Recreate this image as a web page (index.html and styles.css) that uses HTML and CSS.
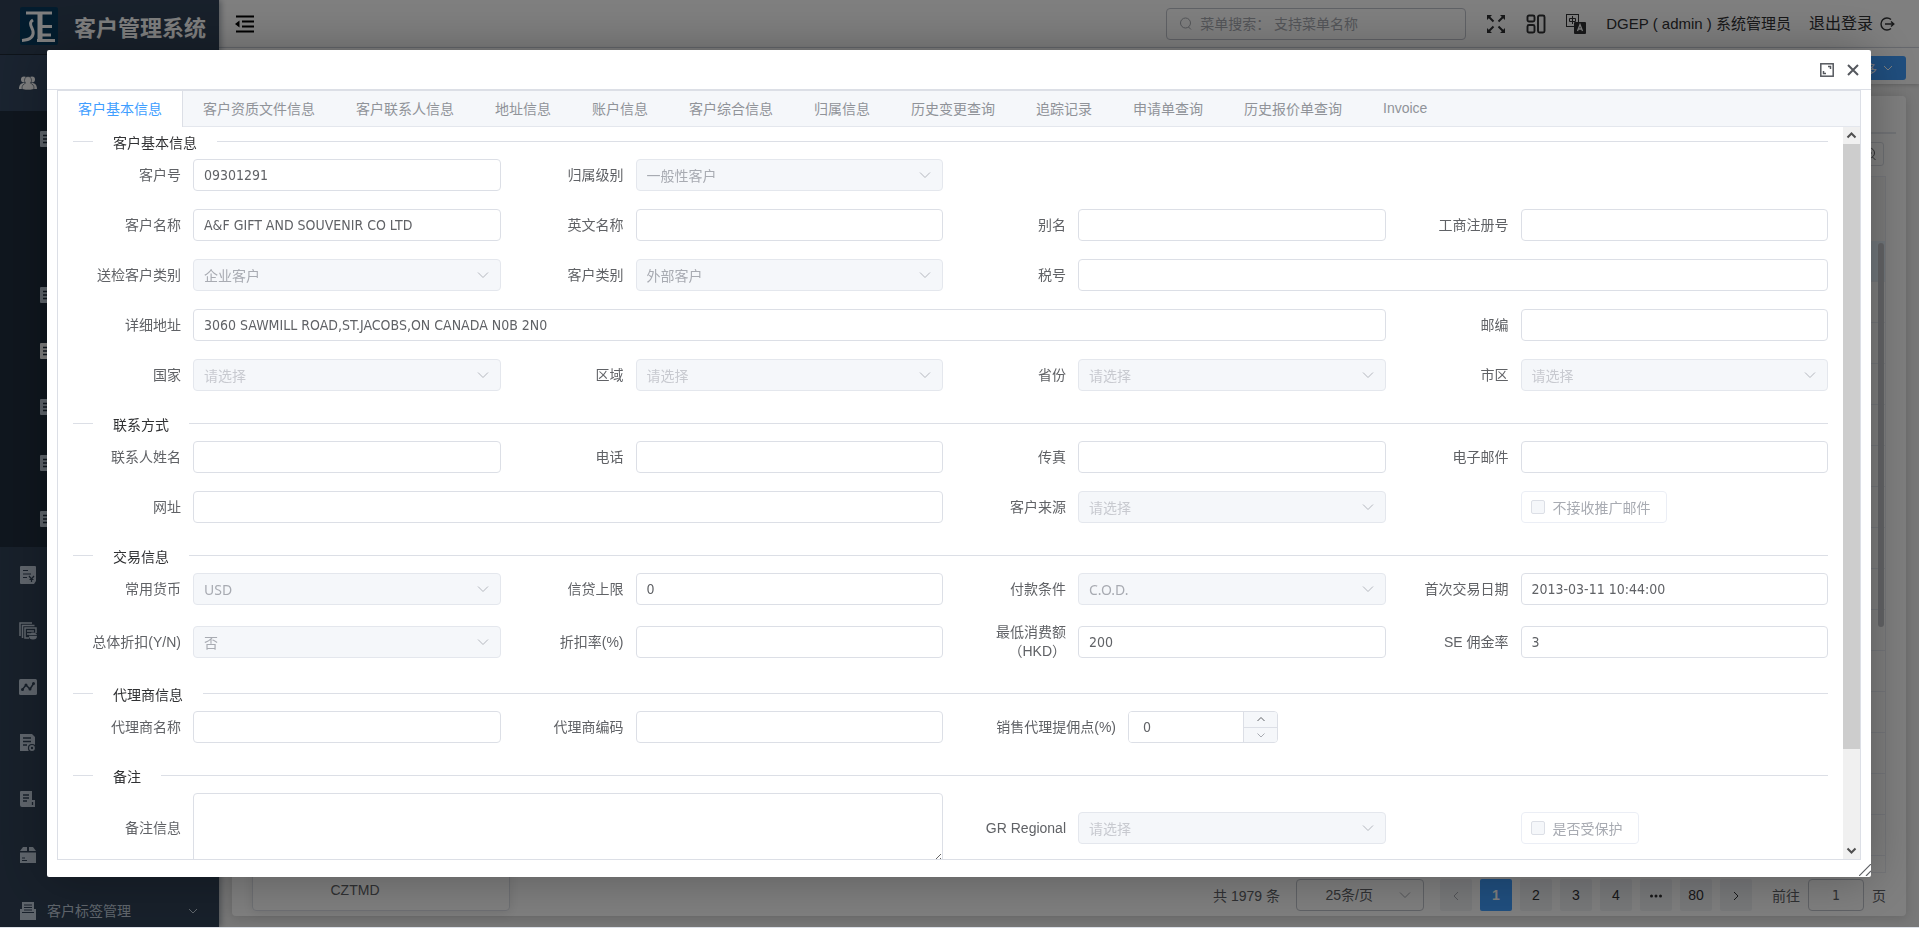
FILE: index.html
```html
<!DOCTYPE html>
<html lang="zh-CN">
<head>
<meta charset="utf-8">
<title>客户管理系统</title>
<link rel="stylesheet" href="styles.css">
</head>
<body>
<div class="app">
  <aside class="sidebar">
    <div class="brand">
      <svg class="brand-logo" viewBox="0 0 38 38" aria-hidden="true"><rect width="38" height="38" rx="2" fill="#06395c"/><g fill="none" stroke="#fff" stroke-width="3"><path d="M6 6h26M19 6v26"/><path d="M32 19.500h-13M31 28h-12M17 33.500h18M21 6v26"/><path d="M13 13c-5 3-1 7 0 11 1 5-2 9-11 9.500"/></g></svg>
      <h1 class="brand-title">客户管理系统</h1>
    </div>
    <nav class="menu">
      <a class="menu-item menu-item-open" href="#" aria-label="客户"><svg class="icon" viewBox="0 0 18 18"><g fill="currentColor"><circle cx="5" cy="5.500" r="3"/><circle cx="13" cy="5.500" r="3"/><path d="M0 15c0-4 2-6 5-6s4 1 4 6zM9 15c0-5 1-6 4-6s5 2 5 6z"/></g><path d="M9 2.500c2 0 3.500 1.500 3.500 4 0 1-.5 2-1 2.700 2 .8 3.500 2.300 3.500 4.800 0 1.500-2 2-6 2s-6-.5-6-2c0-2.500 1.500-4 3.500-4.800-.5-.7-1-1.700-1-2.700 0-2.500 1.500-4 3.500-4z" fill="currentColor" stroke="#304156" stroke-width=".6"/></svg></a>
      <div class="submenu">
        <a class="sub-item" href="#" aria-label="客户管理"><svg class="icon" viewBox="0 0 16 16"><rect width="16" height="16" rx="1" fill="currentColor"/><path d="M3 4.500h10M3 8h10M3 11.500h10" stroke="#1f2d3d" stroke-width="1.500"/></svg></a>
        <div class="sub-nested"></div>
        <a class="sub-item" href="#" aria-label="子菜单一"><svg class="icon" viewBox="0 0 16 16"><rect width="16" height="16" rx="1" fill="currentColor"/><path d="M3 4.500h10M3 8h10M3 11.500h10" stroke="#1f2d3d" stroke-width="1.500"/></svg></a>
        <a class="sub-item sub-item-active" href="#" aria-label="子菜单二"><svg class="icon" viewBox="0 0 16 16"><rect width="16" height="16" rx="1" fill="currentColor"/><path d="M3 4.500h10M3 8h10M3 11.500h10" stroke="#1f2d3d" stroke-width="1.500"/></svg></a>
        <a class="sub-item" href="#" aria-label="子菜单三"><svg class="icon" viewBox="0 0 16 16"><rect width="16" height="16" rx="1" fill="currentColor"/><path d="M3 4.500h10M3 8h10M3 11.500h10" stroke="#1f2d3d" stroke-width="1.500"/></svg></a>
        <a class="sub-item" href="#" aria-label="子菜单四"><svg class="icon" viewBox="0 0 16 16"><rect width="16" height="16" rx="1" fill="currentColor"/><path d="M3 4.500h10M3 8h10M3 11.500h10" stroke="#1f2d3d" stroke-width="1.500"/></svg></a>
        <a class="sub-item" href="#" aria-label="子菜单五"><svg class="icon" viewBox="0 0 16 16"><rect width="16" height="16" rx="1" fill="currentColor"/><path d="M3 4.500h10M3 8h10M3 11.500h10" stroke="#1f2d3d" stroke-width="1.500"/></svg></a>
      </div>
      <a class="menu-item" href="#" aria-label="报价"><svg class="icon" viewBox="0 0 18 18"><path d="M2 0h14a1 1 0 0 1 1 1v14l-2 3H2a1 1 0 0 1-1-1V1a1 1 0 0 1 1-1z" fill="currentColor"/><path d="M4 4.500h5M4 8h8M4 11.500h4M10 10l2.500 3 2.500-3M12.500 13v3M10.500 13.500h4" stroke="#304156" stroke-width="1.200" fill="none"/></svg></a>
      <a class="menu-item" href="#" aria-label="账务"><svg class="icon" viewBox="0 0 18 18"><g fill="none" stroke="currentColor" stroke-width="1.500"><path d="M1 14V1h12M3.500 16V3.500H15.500M10 16H6V6h11v5"/><path d="M8 9h7M8 12h3" /></g><ellipse cx="14" cy="14" rx="4" ry="3.500" fill="currentColor"/><path d="M10 13.500h8" stroke="#304156" stroke-width=".8"/></svg></a>
      <a class="menu-item" href="#" aria-label="统计"><svg class="icon" viewBox="0 0 18 18"><rect y="1" width="18" height="16" rx="1.500" fill="currentColor"/><path d="M3 12l4-5 4 4 4-6" fill="none" stroke="#304156" stroke-width="1.500"/><g fill="#304156"><circle cx="3.500" cy="11.500" r="1.500"/><circle cx="7" cy="7" r="1.500"/><circle cx="11" cy="11" r="1.500"/><circle cx="14.500" cy="5.500" r="1.500"/></g></svg></a>
      <a class="menu-item" href="#" aria-label="申请"><svg class="icon" viewBox="0 0 18 18"><path d="M1 0h12l3 3v14H1z" fill="currentColor"/><path d="M4 4h8M4 7.500h8M4 11h4" stroke="#304156" stroke-width="1.300"/><circle cx="13" cy="14" r="3.500" fill="currentColor" stroke="#304156" stroke-width="1.200"/><circle cx="13" cy="14" r="1.200" fill="#304156"/></svg></a>
      <a class="menu-item" href="#" aria-label="单据"><svg class="icon" viewBox="0 0 18 18"><path d="M2 1h11v9h3v7H3a2 2 0 0 1-2-2V2a1 1 0 0 1 1-1z" fill="currentColor"/><path d="M4 5h6M4 8h6M4 11h4M13.500 12v3" stroke="#304156" stroke-width="1.300"/></svg></a>
      <a class="menu-item" href="#" aria-label="样品"><svg class="icon" viewBox="0 0 18 18"><path d="M4 1h4v4H1zM10 1h4l3 4h-7zM1 6.500h16V17H1z" fill="currentColor"/><path d="M3 12h3M3 14.500h5" stroke="#304156" stroke-width="1.200"/></svg></a>
      <a class="menu-item" href="#"><svg class="icon" viewBox="0 0 18 18"><path d="M3 0h12v10H3zM1 7h2v4h12V7h2v11H1z" fill="currentColor"/><path d="M5 3h8M5 5.500h8M5 8h8" stroke="#304156"/></svg><span class="menu-text">客户标签管理</span><svg class="menu-arrow" viewBox="0 0 12 12"><path d="M2 4l4 4 4-4" fill="none" stroke="currentColor"/></svg></a>
    </nav>
  </aside>
  <div class="main">
    <header class="topbar">
      <button class="icon-button fold" type="button" aria-label="收起菜单"><svg viewBox="0 0 20 18"><path d="M1 1.500h18M7 6.500h12M7 11.500h12M1 16.500h18" stroke="currentColor" stroke-width="1.800"/><path d="M0 9l4.500-3.500v7z" fill="currentColor"/></svg></button>
      <label class="menu-search"><svg viewBox="0 0 14 14"><circle cx="6.500" cy="6" r="5" fill="none" stroke="currentColor"/><path d="M9.500 10l2.500 2.500" stroke="currentColor"/></svg><input class="menu-search-input" type="text" aria-label="菜单搜索" placeholder="菜单搜索： 支持菜单名称"></label>
      <button class="icon-button" type="button" aria-label="全屏"><svg viewBox="0 0 20 20"><path d="M2 2l5.500 5.500M18 2l-5.500 5.500M2 18l5.500-5.500M18 18l-5.500-5.500" stroke="currentColor" stroke-width="2"/><path d="M1 1h5L1 6zM19 1h-5l5 5zM1 19h5l-5-5zM19 19h-5l5-5z" fill="currentColor"/></svg></button>
      <button class="icon-button" type="button" aria-label="布局"><svg viewBox="0 0 20 20"><g fill="none" stroke="currentColor" stroke-width="1.900"><rect x="1.500" y="1.500" width="7" height="6" rx="1.500"/><rect x="1.500" y="11" width="7" height="7.500" rx="1.500"/><rect x="12" y="1.500" width="6.500" height="17" rx="1.500"/></g></svg></button>
      <button class="icon-button" type="button" aria-label="语言"><svg viewBox="0 0 20 20"><rect x=".5" y=".5" width="12" height="12" fill="none" stroke="currentColor"/><path d="M3.500 4.500h6v3h-6zM6.500 2v8" fill="none" stroke="currentColor"/><rect x="8" y="8" width="12" height="12" rx="1" fill="currentColor"/><path d="M11.500 17l2.500-6.500 2.500 6.500M12.500 15h3" fill="none" stroke="#fff" stroke-width="1.300"/></svg></button>
      <span class="user-name">DGEP ( admin ) 系统管理员</span>
      <a class="logout" href="#">退出登录<svg viewBox="0 0 16 16"><path d="M12 3.500A6 6 0 1 0 12 12.500M6 8h8.500M12 5.500L14.800 8 12 10.500" fill="none" stroke="currentColor" stroke-width="1.400"/></svg></a>
    </header>
    <div class="toolbar"><button class="more-button" type="button">更多<svg viewBox="0 0 12 12"><path d="M2 4l4 4 4-4" fill="none" stroke="currentColor"/></svg></button></div>
    <section class="card">
      <div class="tree">CZTMD</div>
      <div class="list">
        <div class="list-tabs"></div>
        <div class="list-tools"><button class="tool-button" type="button" aria-label="查找"><svg viewBox="0 0 14 14"><circle cx="6.500" cy="6" r="5" fill="none" stroke="currentColor"/><path d="M4 6h5M9.500 10l3 3" stroke="currentColor"/></svg></button></div>
        <div class="list-grid">
          <div class="grid-head"></div><div class="grid-row grid-row-current"></div><div class="grid-row"></div><div class="grid-row"></div><div class="grid-row"></div><div class="grid-row"></div><div class="grid-row"></div><div class="grid-row"></div><div class="grid-row"></div><div class="grid-row"></div><div class="grid-row"></div><div class="grid-row"></div><div class="grid-row"></div><div class="grid-row"></div><div class="grid-row"></div><div class="grid-row"></div>
          <div class="grid-thumb"></div>
        </div>
        <div class="pager">
          <span class="pager-total">共 1979 条</span>
          <select class="pager-size" aria-label="每页条数"><option>25条/页</option></select>
          <div class="pager-pages">
            <button class="page page-off" type="button" aria-label="上一页"><svg viewBox="0 0 12 12"><path d="M8 2L4 6l4 4" fill="none" stroke="currentColor"/></svg></button>
            <button class="page page-on" type="button">1</button>
            <button class="page" type="button">2</button>
            <button class="page" type="button">3</button>
            <button class="page" type="button">4</button>
            <button class="page" type="button" aria-label="更多页"><svg viewBox="0 0 12 12" fill="currentColor"><circle cx="1.500" cy="6" r="1.500"/><circle cx="6" cy="6" r="1.500"/><circle cx="10.500" cy="6" r="1.500"/></svg></button>
            <button class="page" type="button">80</button>
            <button class="page" type="button" aria-label="下一页"><svg viewBox="0 0 12 12"><path d="M4 2l4 4-4 4" fill="none" stroke="currentColor"/></svg></button>
          </div>
          <label class="pager-jump">前往<input class="pager-input" type="text" value="1">页</label>
        </div>
      </div>
    </section>
  </div>
</div>

<div class="overlay">
  <div class="dialog" role="dialog" aria-label="客户基本信息">
    <div class="dialog-head">
      <button class="dialog-button" type="button" aria-label="最大化"><svg viewBox="0 0 14 14"><rect x=".8" y=".8" width="12.400" height="12.400" fill="none" stroke="currentColor" stroke-width="1.500"/><path d="M8 3.500h2.500V6M6 10.500H3.500V8" fill="none" stroke="currentColor" stroke-width="1.500"/></svg></button>
      <button class="dialog-button" type="button" aria-label="关闭"><svg viewBox="0 0 14 14"><path d="M2 2l10 10M12 2L2 12" stroke="currentColor" stroke-width="2"/></svg></button>
    </div>
    <div class="tabs">
      <div class="tab-bar" role="tablist">
        <button class="tab tab-active" role="tab" type="button">客户基本信息</button>
        <button class="tab" role="tab" type="button">客户资质文件信息</button>
        <button class="tab" role="tab" type="button">客户联系人信息</button>
        <button class="tab" role="tab" type="button">地址信息</button>
        <button class="tab" role="tab" type="button">账户信息</button>
        <button class="tab" role="tab" type="button">客户综合信息</button>
        <button class="tab" role="tab" type="button">归属信息</button>
        <button class="tab" role="tab" type="button">历史变更查询</button>
        <button class="tab" role="tab" type="button">追踪记录</button>
        <button class="tab" role="tab" type="button">申请单查询</button>
        <button class="tab" role="tab" type="button">历史报价单查询</button>
        <button class="tab" role="tab" type="button">Invoice</button>
      </div>
      <div class="panel">
        <form class="form">
          <h2 class="divider"><span>客户基本信息</span></h2>
          <div class="fields">
            <div class="field"><label class="label" for="f1">客户号</label><input class="input" id="f1" value="09301291"></div>
            <div class="field"><label class="label" for="f2">归属级别</label><select class="input" id="f2" disabled><option>一般性客户</option></select></div>
            <div class="field first"><label class="label" for="f3">客户名称</label><input class="input" id="f3" value="A&amp;F GIFT AND SOUVENIR CO LTD"></div>
            <div class="field"><label class="label" for="f4">英文名称</label><input class="input" id="f4"></div>
            <div class="field"><label class="label" for="f5">别名</label><input class="input" id="f5"></div>
            <div class="field"><label class="label" for="f6">工商注册号</label><input class="input" id="f6"></div>
            <div class="field"><label class="label" for="f7">送检客户类别</label><select class="input" id="f7" disabled><option>企业客户</option></select></div>
            <div class="field"><label class="label" for="f8">客户类别</label><select class="input" id="f8" disabled><option>外部客户</option></select></div>
            <div class="field span-2"><label class="label" for="f9">税号</label><input class="input" id="f9"></div>
            <div class="field span-3"><label class="label" for="f10">详细地址</label><input class="input" id="f10" value="3060 SAWMILL ROAD,ST.JACOBS,ON CANADA N0B 2N0"></div>
            <div class="field"><label class="label" for="f11">邮编</label><input class="input" id="f11"></div>
            <div class="field"><label class="label" for="f12">国家</label><select class="input empty" id="f12" disabled><option>请选择</option></select></div>
            <div class="field"><label class="label" for="f13">区域</label><select class="input empty" id="f13" disabled><option>请选择</option></select></div>
            <div class="field"><label class="label" for="f14">省份</label><select class="input empty" id="f14" disabled><option>请选择</option></select></div>
            <div class="field"><label class="label" for="f15">市区</label><select class="input empty" id="f15" disabled><option>请选择</option></select></div>
          </div>
          <h2 class="divider"><span>联系方式</span></h2>
          <div class="fields">
            <div class="field"><label class="label" for="f16">联系人姓名</label><input class="input" id="f16"></div>
            <div class="field"><label class="label" for="f17">电话</label><input class="input" id="f17"></div>
            <div class="field"><label class="label" for="f18">传真</label><input class="input" id="f18"></div>
            <div class="field"><label class="label" for="f19">电子邮件</label><input class="input" id="f19"></div>
            <div class="field span-2"><label class="label" for="f20">网址</label><input class="input" id="f20"></div>
            <div class="field"><label class="label" for="f21">客户来源</label><select class="input empty" id="f21" disabled><option>请选择</option></select></div>
            <div class="field indent"><label class="check"><input type="checkbox" class="check-box" disabled>不接收推广邮件</label></div>
          </div>
          <h2 class="divider"><span>交易信息</span></h2>
          <div class="fields">
            <div class="field"><label class="label" for="f22">常用货币</label><select class="input" id="f22" disabled><option>USD</option></select></div>
            <div class="field"><label class="label" for="f23">信贷上限</label><input class="input" id="f23" value="0"></div>
            <div class="field"><label class="label" for="f24">付款条件</label><select class="input" id="f24" disabled><option>C.O.D.</option></select></div>
            <div class="field"><label class="label" for="f25">首次交易日期</label><input class="input" id="f25" value="2013-03-11 10:44:00"></div>
            <div class="field"><label class="label" for="f26">总体折扣(Y/N)</label><select class="input" id="f26" disabled><option>否</option></select></div>
            <div class="field"><label class="label" for="f27">折扣率(%)</label><input class="input" id="f27"></div>
            <div class="field"><label class="label" for="f28">最低消费额（HKD）</label><input class="input" id="f28" value="200"></div>
            <div class="field"><label class="label" for="f29">SE 佣金率</label><input class="input" id="f29" value="3"></div>
          </div>
          <h2 class="divider"><span>代理商信息</span></h2>
          <div class="fields">
            <div class="field"><label class="label" for="f30">代理商名称</label><input class="input" id="f30"></div>
            <div class="field"><label class="label" for="f31">代理商编码</label><input class="input" id="f31"></div>
            <div class="field"><label class="label label-wide" for="f32">销售代理提佣点(%)</label>
              <div class="stepper"><input class="stepper-input" id="f32" value="0"><div class="stepper-buttons"><button class="step" type="button" aria-label="增加"><svg viewBox="0 0 12 12"><path d="M2.500 8L6 4.500 9.500 8" fill="none" stroke="currentColor"/></svg></button><button class="step step-off" type="button" aria-label="减少"><svg viewBox="0 0 12 12"><path d="M2.500 4.500L6 8l3.500-3.500" fill="none" stroke="currentColor"/></svg></button></div></div>
            </div>
          </div>
          <h2 class="divider"><span>备注</span></h2>
          <div class="fields">
            <div class="field span-2"><label class="label" for="f33">备注信息</label><textarea class="input area" id="f33"></textarea></div>
            <div class="field"><label class="label" for="f34">GR Regional</label><select class="input empty" id="f34" disabled><option>请选择</option></select></div>
            <div class="field indent"><label class="check"><input type="checkbox" class="check-box" disabled>是否受保护</label></div>
          </div>
        </form>
        <div class="scrollbar" aria-hidden="true">
          <svg class="scroll-arrow" viewBox="0 0 17 17"><path d="M4.500 10.500l4-4 4 4" fill="none" stroke="#505050" stroke-width="2"/></svg>
          <div class="scroll-thumb"></div>
          <div class="scroll-rest"></div>
          <svg class="scroll-arrow" viewBox="0 0 17 17"><path d="M4.500 6.500l4 4 4-4" fill="none" stroke="#505050" stroke-width="2"/></svg>
        </div>
      </div>
    </div>
    <svg class="resizer" viewBox="0 0 12 12" aria-hidden="true"><path d="M0 12L12 0M7 12l5-5" stroke="#606266" stroke-width="1.200"/></svg>
  </div>
</div>
</body>
</html>
```
FILE: styles.css
```css
* { box-sizing: border-box; }

body {
  margin: 0;
  height: 100vh;
  overflow: hidden;
  background: #dde1e8;
  color: #606266;
  font-family: "Liberation Sans", "Noto Sans CJK SC", sans-serif;
  font-size: 14px;
}

button, input, select, textarea { font: inherit; color: inherit; }
button { padding: 0; border: 0; background: none; }
a { color: inherit; text-decoration: none; }

.app { display: flex; height: calc(100vh - 1px); background: #f0f0f0; overflow: hidden; }

/* Sidebar */
.sidebar { flex: none; width: 219px; background: #304156; color: #bfcbd9; box-shadow: 2px 0 6px rgba(0, 21, 41, .35); z-index: 1; }
.brand { display: flex; align-items: center; gap: 16px; height: 55px; padding: 0 0 2px 20px; border-bottom: 1px solid #1c2733; }
.brand-logo { width: 38px; height: 38px; }
.brand-title { margin: 6px 0 0; font-size: 22px; line-height: 28px; font-weight: 700; color: #fff; white-space: nowrap; }
.menu-item { display: flex; align-items: center; height: 56px; padding: 0 20px 0 19px; }
.menu-item-open { background: #344760; color: #fff; }
.menu-text { flex: 1; margin-left: 10px; line-height: 20px; }
.icon { flex: none; width: 18px; height: 18px; }
.menu-arrow { width: 12px; height: 12px; }
.submenu { background: #1f2d3d; }
.sub-item { display: flex; align-items: center; height: 56px; padding-left: 40px; }
.sub-item .icon { width: 16px; height: 16px; }
.sub-item-active { color: #fff; }
.sub-nested { height: 100px; }

/* Top bar */
.main { flex: 1; min-width: 0; display: flex; flex-direction: column; }
.topbar { flex: none; display: flex; align-items: center; height: 48px; padding: 0 24px 0 16px; background: #fff; border-bottom: 1px solid #d8dce5; color: #303133; }
.icon-button { flex: none; width: 20px; height: 20px; margin-right: 20px; line-height: 0; }
.icon-button svg { width: 20px; height: 20px; }
.fold { margin-right: auto; color: #000; }
.menu-search { display: flex; align-items: center; gap: 7px; width: 300px; height: 32px; margin-right: 20px; padding: 0 12px; border: 1px solid #c0c4cc; border-radius: 4px; color: #a8abb2; }
.menu-search svg { width: 14px; height: 14px; }
.menu-search-input { flex: 1; min-width: 0; padding: 0; border: 0; outline: 0; background: none; }
.menu-search-input::placeholder { color: #a8abb2; }
.user-name { margin-right: 18px; font-size: 15px; line-height: 20px; white-space: nowrap; }
.logout { display: flex; align-items: center; gap: 6px; font-size: 16px; line-height: 20px; white-space: nowrap; }
.logout svg { width: 16px; height: 16px; }

.toolbar { flex: none; display: flex; justify-content: flex-end; align-items: center; height: 36px; margin-bottom: 12px; padding-right: 13px; padding-top: 4px; background: #fff; box-shadow: 0 1px 4px rgba(0, 0, 0, .2); }
.more-button { display: flex; align-items: center; justify-content: flex-end; gap: 5px; width: 80px; height: 24px; padding-right: 12px; border-radius: 3px; background: #409eff; color: #fff; font-size: 12px; }
.more-button svg { width: 12px; height: 12px; }

/* Background list */
.card { flex: 1; min-height: 0; display: flex; gap: 20px; margin: 0 13px 11px; padding: 0 20px 5px; background: #fff; border-radius: 4px; box-shadow: 0 2px 12px rgba(0, 0, 0, .15); }
.tree { flex: none; display: flex; align-items: flex-end; justify-content: center; width: 258px; padding: 0 52px 11px 0; border: 1px solid #dcdfe6; border-radius: 4px; box-shadow: 0 2px 12px rgba(0, 0, 0, .1); line-height: 18px; }
.list { flex: 1; min-width: 0; display: flex; flex-direction: column; }
.list-tabs { flex: none; height: 38px; margin-right: -10px; border-bottom: 2px solid #e4e7ed; }
.list-tools { flex: none; display: flex; justify-content: flex-end; height: 42px; padding: 8px 2px 10px 0; }
.tool-button { width: 40px; height: 24px; padding-left: 12px; border: 1px solid #dcdfe6; border-radius: 3px; line-height: 0; }
.tool-button svg { width: 14px; height: 14px; }
.list-grid { position: relative; flex: 1; min-height: 0; overflow: hidden; border: 1px solid #ebeef5; }
.grid-head { height: 64px; background: #f8f8f9; }
.grid-row { height: 41px; border-bottom: 1px solid #ebeef5; }
.grid-row-current { background: #e6f1fb; }
.grid-thumb { position: absolute; top: 66px; right: 1px; width: 6px; height: 384px; border-radius: 3px; background: #c8cacf; }
.pager { flex: none; display: flex; align-items: center; justify-content: flex-end; height: 38px; padding-top: 6px; }
.pager-total { margin-right: 16px; }
.pager-size { width: 128px; height: 32px; margin-right: 16px; padding: 0 50px 0 0; appearance: none; border: 1px solid #c0c4cc; border-radius: 4px; background: url("data:image/svg+xml,%3Csvg xmlns='http://www.w3.org/2000/svg' width='12' height='12'%3E%3Cpath d='M1 3.500l5 5 5-5' fill='none' stroke='%23a8abb2'/%3E%3C/svg%3E") no-repeat right 12px center; text-align: right; text-align-last: right; }
.pager-pages { display: flex; gap: 8px; }
.page { width: 32px; height: 32px; border-radius: 2px; background: #f0f2f5; color: #303133; }
.page svg { width: 12px; height: 12px; vertical-align: middle; }
.page-on { background: #409eff; color: #fff; font-weight: 700; }
.page-off { color: #a8abb2; }
.pager-jump { display: flex; align-items: center; gap: 8px; margin-left: 20px; }
.pager-input { width: 56px; height: 32px; padding: 0; border: 1px solid #c0c4cc; border-radius: 4px; background: none; text-align: center; font-family: "DejaVu Sans Condensed", "Noto Sans", sans-serif; }

/* Dialog */
.overlay { position: fixed; inset: 0 0 1px 0; z-index: 10; display: flex; padding: 50px 48px 50px 47px; background: rgba(0, 0, 0, .5); }
.dialog { position: relative; flex: 1; min-width: 0; display: flex; flex-direction: column; background: #fff; border-radius: 2px; box-shadow: 1px 1px 50px rgba(0, 0, 0, .3); }
.dialog-head { flex: none; display: flex; align-items: center; justify-content: flex-end; gap: 12px; height: 40px; padding-right: 11px; border-bottom: 1px solid #dcdfe6; }
.dialog-button { width: 14px; height: 14px; line-height: 0; color: #55585e; }
.dialog-button svg { width: 14px; height: 14px; }
.resizer { position: absolute; right: 0; bottom: 1px; width: 12px; height: 12px; }

.tabs { flex: 1; min-height: 0; display: flex; flex-direction: column; margin: 0 10px 17px; border: 1px solid #dcdfe6; }
.tab-bar { flex: none; display: flex; height: 36px; background: #f5f7fa; border-bottom: 1px solid #e4e7ed; }
.tab { height: 36px; padding: 0 20px 2px; border-right: 1px solid transparent; color: #909399; white-space: nowrap; }
.tab-active { background: #fff; border-right-color: #dcdfe6; color: #409eff; }
.panel { flex: 1; min-height: 0; display: flex; overflow: hidden; }
.form { flex: 1; min-width: 0; padding-right: 15px; }

.scrollbar { flex: none; display: flex; flex-direction: column; width: 17px; background: #f0f0f0; }
.scroll-arrow { flex: none; width: 17px; height: 17px; }
.scroll-thumb { flex: 605; background: #cdcdcd; }
.scroll-rest { flex: 93; }

.divider { display: flex; align-items: center; gap: 20px; height: 32px; margin: 0 0 0 15px; font-size: 14px; font-weight: 400; line-height: 32px; color: #303133; }
.divider::before, .divider::after { content: ""; margin-bottom: 4px; border-top: 1px solid #dcdfe6; }
.divider::before { width: 20px; }
.divider::after { flex: 1; }
.fields { display: grid; grid-template-columns: repeat(4, minmax(0, 1fr)); row-gap: 18px; padding-bottom: 18px; }
.field { display: flex; align-items: center; min-width: 0; }
.first { grid-column-start: 1; }
.span-2 { grid-column: span 2; }
.span-3 { grid-column: span 3; }
.indent { padding-left: 135px; }
.label { flex: none; width: 135px; padding: 0 12px; line-height: 19px; text-align: right; }
.label-wide { width: 185px; }
.input { flex: 1; min-width: 0; width: 100%; height: 32px; padding: 0 10px; appearance: none; border: 1px solid #dcdfe6; border-radius: 4px; background-color: #fff; outline: 0; font-family: "DejaVu Sans Condensed", "Noto Sans", "Noto Sans CJK SC", sans-serif; }
select.input { font-family: "Noto Sans", "Noto Sans CJK SC", sans-serif; }
select.input:disabled { opacity: 1; border-color: #e4e7ed; color: #a8abb2; background: #f5f7fa url("data:image/svg+xml,%3Csvg xmlns='http://www.w3.org/2000/svg' width='12' height='12'%3E%3Cpath d='M1 3.500l5 5 5-5' fill='none' stroke='%23b4b7be'/%3E%3C/svg%3E") no-repeat right 11px center; }
select.input.empty:disabled { color: #c8cad0; }
.area { height: 70px; resize: vertical; }
.check { display: flex; align-items: center; gap: 8px; height: 32px; padding: 0 15px 0 9px; border: 1px solid #ebeef5; border-radius: 4px; color: #a8abb2; white-space: nowrap; }
.check-box { width: 14px; height: 14px; margin: 0; appearance: none; border: 1px solid #dcdfe6; border-radius: 2px; background: #f5f7fa; }
.stepper { display: flex; width: 150px; height: 32px; border: 1px solid #dcdfe6; border-radius: 4px; overflow: hidden; }
.stepper-input { flex: 1; min-width: 0; padding: 0 14px; border: 0; outline: 0; font-family: "DejaVu Sans Condensed", "Noto Sans", sans-serif; }
.stepper-buttons { flex: none; display: flex; flex-direction: column; width: 34px; border-left: 1px solid #dcdfe6; background: #f5f7fa; }
.step { flex: 1; line-height: 0; color: #606266; }
.step + .step { border-top: 1px solid #dcdfe6; }
.step-off { color: #a8abb2; }
.step svg { width: 12px; height: 12px; }
```
